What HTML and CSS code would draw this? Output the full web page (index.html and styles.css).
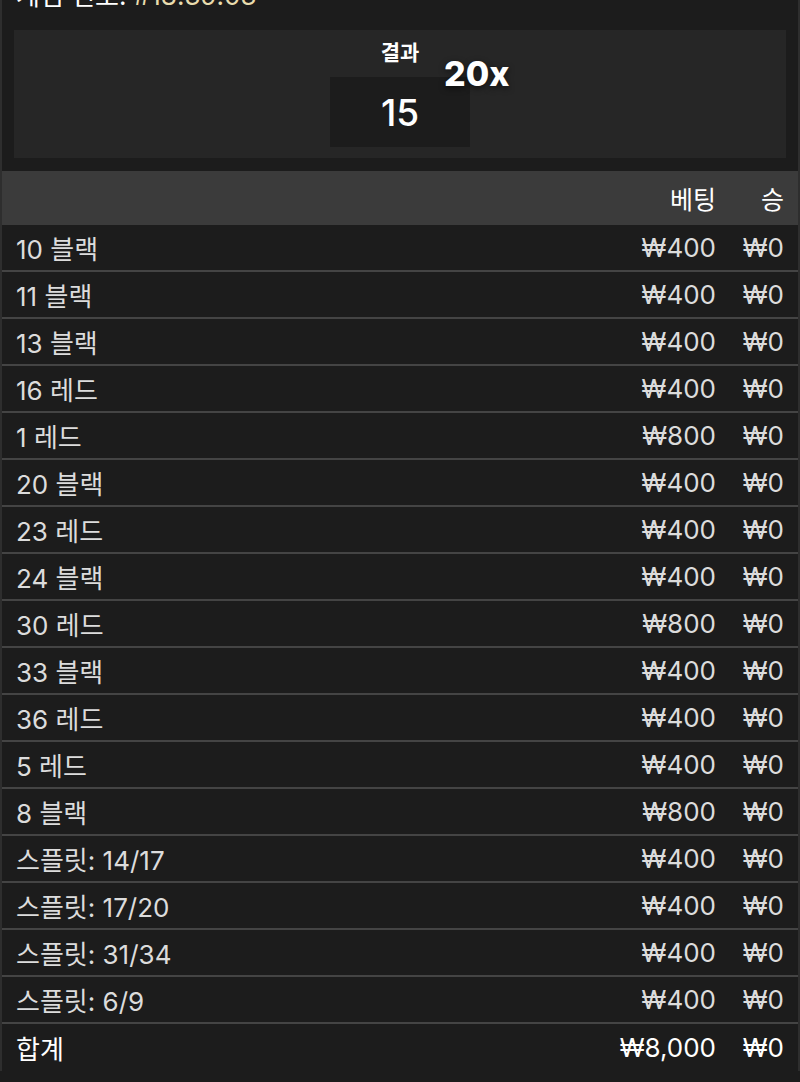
FILE: index.html
```html
<!doctype html>
<html lang="ko">
<head>
    <meta charset="UTF-8" />
    <meta name="viewport" content="width=device-width, initial-scale=1.0" />
    <title>베팅 내역</title>
    <link rel="stylesheet" href="styles.css">
</head>
<body>
    <div class="slip">
        <div class="game-id">게임 번호: <span class="game-code">#18:39:03</span></div>

        <div class="result-panel">
            <div class="result-title">결과</div>
            <div class="result-box">
                <span class="result-num">15</span>
                <span class="multiplier">20x</span>
            </div>
        </div>

        <div class="bets">
            <div class="row head">
                <span></span>
                <span class="num">베팅</span>
                <span class="num">승</span>
            </div>
            <div class="row"><span>10 블랙</span><span class="num">₩400</span><span class="num">₩0</span></div>
            <div class="row"><span>11 블랙</span><span class="num">₩400</span><span class="num">₩0</span></div>
            <div class="row"><span>13 블랙</span><span class="num">₩400</span><span class="num">₩0</span></div>
            <div class="row"><span>16 레드</span><span class="num">₩400</span><span class="num">₩0</span></div>
            <div class="row"><span>1 레드</span><span class="num">₩800</span><span class="num">₩0</span></div>
            <div class="row"><span>20 블랙</span><span class="num">₩400</span><span class="num">₩0</span></div>
            <div class="row"><span>23 레드</span><span class="num">₩400</span><span class="num">₩0</span></div>
            <div class="row"><span>24 블랙</span><span class="num">₩400</span><span class="num">₩0</span></div>
            <div class="row"><span>30 레드</span><span class="num">₩800</span><span class="num">₩0</span></div>
            <div class="row"><span>33 블랙</span><span class="num">₩400</span><span class="num">₩0</span></div>
            <div class="row"><span>36 레드</span><span class="num">₩400</span><span class="num">₩0</span></div>
            <div class="row"><span>5 레드</span><span class="num">₩400</span><span class="num">₩0</span></div>
            <div class="row"><span>8 블랙</span><span class="num">₩800</span><span class="num">₩0</span></div>
            <div class="row"><span>스플릿: 14/17</span><span class="num">₩400</span><span class="num">₩0</span></div>
            <div class="row"><span>스플릿: 17/20</span><span class="num">₩400</span><span class="num">₩0</span></div>
            <div class="row"><span>스플릿: 31/34</span><span class="num">₩400</span><span class="num">₩0</span></div>
            <div class="row"><span>스플릿: 6/9</span><span class="num">₩400</span><span class="num">₩0</span></div>
            <div class="row total"><span>합계</span><span class="num">₩8,000</span><span class="num">₩0</span></div>
        </div>
    </div>
</body>
</html>
```

FILE: styles.css
```css
* {
    margin: 0;
    padding: 0;
    box-sizing: border-box;
}

body {
    font-family: "Inter", "Noto Sans CJK KR", sans-serif;
    background: #1c1c1c;
    color: #fff;
    overflow: hidden;
}

.slip {
    border-left: 2px solid #2e2e2e;
    border-right: 2px solid #2e2e2e;
    min-height: 100vh;
}

.game-id {
    margin-top: -20px;
    padding-left: 14px;
    font-size: 26px;
    line-height: 32px;
    color: #fff;
}

.game-code {
    color: #e9dcae;
}

.result-panel {
    margin: 18px 12px 0;
    height: 128px;
    background: #262626;
    display: flex;
    flex-direction: column;
    align-items: center;
    padding-top: 10px;
}

.result-title {
    font-size: 21px;
    font-weight: 600;
    line-height: 26px;
}

.result-box {
    position: relative;
    margin-top: 11px;
    width: 140px;
    height: 70px;
    background: #1c1c1c;
    display: flex;
    align-items: center;
    justify-content: center;
}

.result-num {
    font-size: 37px;
    font-weight: 500;
}

.multiplier {
    position: absolute;
    left: 114px;
    top: -24px;
    font-size: 34px;
    font-weight: 800;
    text-shadow: 0 2px 6px rgba(0, 0, 0, 0.6);
}

.bets {
    margin-top: 13px;
}

.row {
    display: grid;
    grid-template-columns: 1fr auto 68px;
    align-items: center;
    height: 47px;
    padding: 0 14px;
    font-size: 26px;
    color: #dcdcdc;
    border-bottom: 2px solid #444;
}

.row .num {
    text-align: right;
}

.row.head {
    height: 54px;
    background: #3b3b3b;
    color: #fff;
    border-bottom: none;
    font-size: 25px;
}

.row.total {
    color: #fff;
    border-bottom: none;
}
```
